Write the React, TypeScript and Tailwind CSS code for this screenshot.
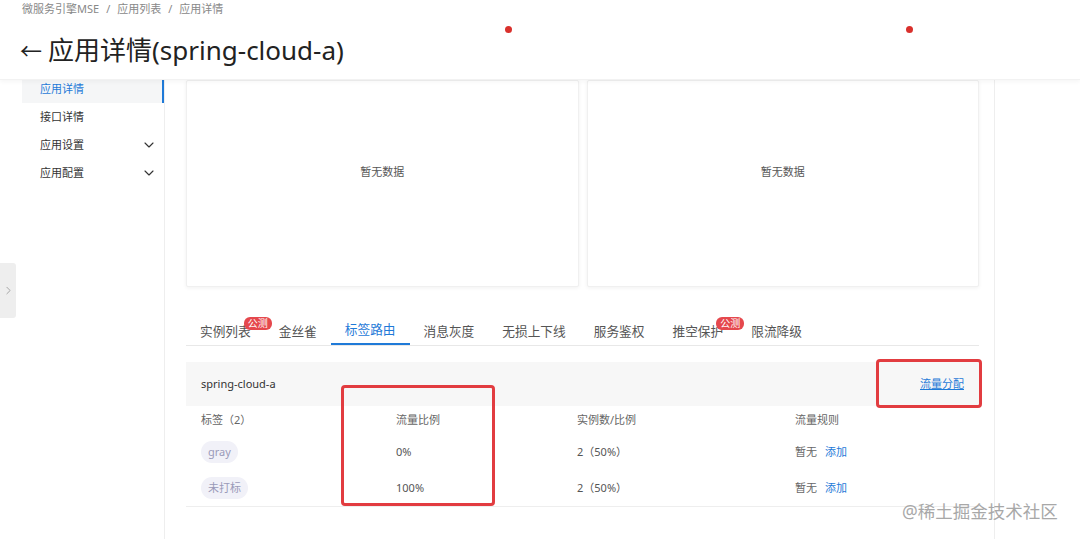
import { ChevronDown, ChevronRight } from "lucide-react";

const font = { fontFamily: '"Noto Sans", "Noto Sans CJK SC", sans-serif' };

const tabs = [
  { label: "实例列表", badge: true },
  { label: "金丝雀" },
  { label: "标签路由", active: true },
  { label: "消息灰度" },
  { label: "无损上下线" },
  { label: "服务鉴权" },
  { label: "推空保护", badge: true },
  { label: "限流降级" },
];

const rows = [
  { tag: "gray", ratio: "0%", count: "2（50%）" },
  { tag: "未打标", ratio: "100%", count: "2（50%）" },
];

function EmptyCard() {
  return (
    <div className="flex h-[207px] w-[393px] items-center justify-center rounded-[2px] border border-[#f0f0f0] bg-white pb-[22px] shadow-[0_1px_4px_rgba(0,0,0,0.06)]">
      <span className="text-[11px] text-[#555]">暂无数据</span>
    </div>
  );
}

export default function App() {
  return (
    <div className="relative h-[539px] w-[1080px] overflow-hidden bg-white text-[#333]" style={font}>
      {/* header */}
      <div className="relative z-10 h-[80px] border-b border-[#f2f2f2] bg-white px-[20px] shadow-[0_2px_4px_rgba(0,0,0,0.04)]">
        <div className="flex items-center gap-[7px] pl-[2px] pt-[1px] text-[11px] leading-[16px] text-[#888]">
          <span>微服务引擎MSE</span>
          <span>/</span>
          <span>应用列表</span>
          <span>/</span>
          <span>应用详情</span>
        </div>
        <div className="mt-[16px] flex items-center gap-[6px] text-[26px] leading-[34px] text-[#222]">
          <span className="text-[22px]">←</span>
          <span>应用详情(spring-cloud-a)</span>
        </div>
      </div>

      <div className="flex h-[459px]">
        {/* sidebar */}
        <div className="w-[165px] shrink-0 border-r border-[#eee]">
          <div className="-mt-[5px] pl-[22px] text-[11px]">
            <div className="flex h-[28px] items-center border-r-2 border-[#1f7ad8] bg-[#f5f6f7] pl-[18px] text-[#1f7ad8]">
              应用详情
            </div>
            <div className="flex h-[28px] items-center pl-[18px] text-[#333]">接口详情</div>
            <div className="flex h-[28px] items-center justify-between pl-[18px] pr-[7px] text-[#333]">
              应用设置
              <ChevronDown size={16} strokeWidth={1.7} className="text-[#333]" />
            </div>
            <div className="flex h-[28px] items-center justify-between pl-[18px] pr-[7px] text-[#333]">
              应用配置
              <ChevronDown size={16} strokeWidth={1.7} className="text-[#333]" />
            </div>
          </div>
        </div>

        {/* main */}
        <div className="w-[830px] shrink-0 border-r border-[#eee] pl-[21px] pr-[15px]">
          <div className="flex gap-[8px]">
            <EmptyCard />
            <EmptyCard />
          </div>

          <div className="mt-[30px] flex border-b border-[#e8e8e8] text-[12.7px]">
            {tabs.map((t) => (
              <div
                key={t.label}
                className={`relative flex h-[28px] items-center px-[14px] ${
                  t.active ? "border-b-2 border-[#1f7ad8] text-[#1f7ad8]" : "text-[#555]"
                }`}
              >
                <span className={t.active ? "" : "pt-[2px]"}>{t.label}</span>
                {t.badge && (
                  <span className="absolute right-[-7px] top-0 rounded-[6px] bg-[#e5484d] px-[4px] text-[10px] leading-[13px] text-white">
                    公测
                  </span>
                )}
              </div>
            ))}
          </div>

          <div className="mt-[16px] text-[11px]">
            <div className="flex h-[44px] items-center justify-between bg-[#f7f7f7] px-[15px]">
              <span className="text-[#333]">spring-cloud-a</span>
              <span className="text-[#1f7ad8] underline">流量分配</span>
            </div>
            <div className="border-b border-[#eee] px-[15px]">
              <div className="grid h-[28px] grid-cols-[195px_181px_218px_1fr] items-center text-[#666]">
                <span>标签（2）</span>
                <span>流量比例</span>
                <span>实例数/比例</span>
                <span>流量规则</span>
              </div>
              {rows.map((r) => (
                <div key={r.tag} className="grid h-[36px] grid-cols-[195px_181px_218px_1fr] items-center text-[#555]">
                  <span>
                    <span className="inline-flex h-[22px] items-center rounded-full bg-[#f1f1f8] px-[7px] text-[#9a9ab8]">
                      {r.tag}
                    </span>
                  </span>
                  <span>{r.ratio}</span>
                  <span>{r.count}</span>
                  <span className="flex gap-[8px]">
                    <span className="text-[#666]">暂无</span>
                    <span className="text-[#1f7ad8]">添加</span>
                  </span>
                </div>
              ))}
            </div>
          </div>
        </div>
      </div>

      {/* collapse handle */}
      <div className="absolute left-0 top-[263px] flex h-[55px] w-[16px] items-center justify-center rounded-r-[3px] bg-[#eeeeee]">
        <ChevronRight size={13} strokeWidth={1.6} className="text-[#999]" />
      </div>

      {/* red annotation dots */}
      <div className="absolute left-[505px] top-[26px] z-20 h-[7px] w-[7px] rounded-full bg-[#d9302c]" />
      <div className="absolute left-[906px] top-[26px] z-20 h-[7px] w-[7px] rounded-full bg-[#d9302c]" />

      {/* red annotation boxes */}
      <div className="absolute left-[341px] top-[385px] h-[121px] w-[154px] rounded-[4px] border-[3px] border-[#e23c40]" />
      <div className="absolute left-[876px] top-[359px] h-[49px] w-[106px] rounded-[4px] border-[3px] border-[#e23c40]" />

      {/* watermark */}
      <div className="absolute left-[902px] top-[500px] text-[17.5px] leading-[22px] text-[#a8a8a8]">
        @稀土掘金技术社区
      </div>
    </div>
  );
}
